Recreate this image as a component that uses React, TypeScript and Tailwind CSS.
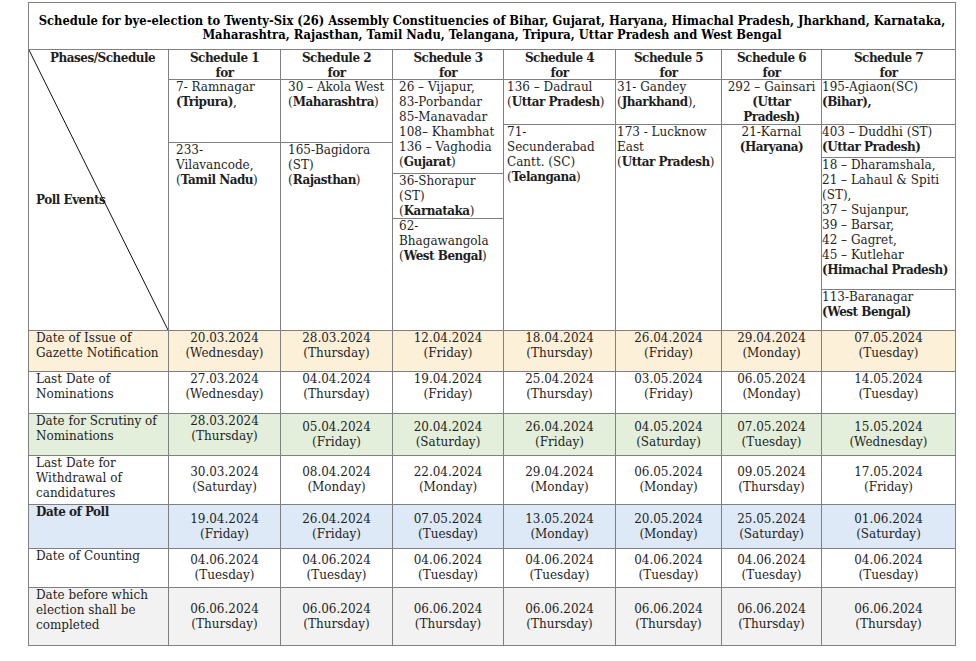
import React from 'react';

const serif = { fontFamily: "'DejaVu Serif', 'Liberation Serif', serif" };

const rows = [
  {
    label: ['Date of Issue of', 'Gazette Notification'],
    bg: 'bg-[#fdf0d8]',
    h: 'h-[41px]',
    top: true,
    dates: [
      ['20.03.2024', '(Wednesday)'],
      ['28.03.2024', '(Thursday)'],
      ['12.04.2024', '(Friday)'],
      ['18.04.2024', '(Thursday)'],
      ['26.04.2024', '(Friday)'],
      ['29.04.2024', '(Monday)'],
      ['07.05.2024', '(Tuesday)'],
    ],
  },
  {
    label: ['Last Date of', 'Nominations'],
    bg: 'bg-white',
    h: 'h-[42px]',
    top: true,
    dates: [
      ['27.03.2024', '(Wednesday)'],
      ['04.04.2024', '(Thursday)'],
      ['19.04.2024', '(Friday)'],
      ['25.04.2024', '(Thursday)'],
      ['03.05.2024', '(Friday)'],
      ['06.05.2024', '(Monday)'],
      ['14.05.2024', '(Tuesday)'],
    ],
  },
  {
    label: ['Date for Scrutiny of', 'Nominations'],
    bg: 'bg-[#e3efdb]',
    h: 'h-[42px]',
    top: false,
    firstTop: true,
    dates: [
      ['28.03.2024', '(Thursday)'],
      ['05.04.2024', '(Friday)'],
      ['20.04.2024', '(Saturday)'],
      ['26.04.2024', '(Friday)'],
      ['04.05.2024', '(Saturday)'],
      ['07.05.2024', '(Tuesday)'],
      ['15.05.2024', '(Wednesday)'],
    ],
  },
  {
    label: ['Last Date for', 'Withdrawal of', 'candidatures'],
    bg: 'bg-white',
    h: 'h-[49px]',
    top: false,
    dates: [
      ['30.03.2024', '(Saturday)'],
      ['08.04.2024', '(Monday)'],
      ['22.04.2024', '(Monday)'],
      ['29.04.2024', '(Monday)'],
      ['06.05.2024', '(Monday)'],
      ['09.05.2024', '(Thursday)'],
      ['17.05.2024', '(Friday)'],
    ],
  },
  {
    label: ['Date of Poll'],
    bold: true,
    bg: 'bg-[#dde9f6]',
    h: 'h-[44px]',
    top: false,
    dates: [
      ['19.04.2024', '(Friday)'],
      ['26.04.2024', '(Friday)'],
      ['07.05.2024', '(Tuesday)'],
      ['13.05.2024', '(Monday)'],
      ['20.05.2024', '(Monday)'],
      ['25.05.2024', '(Saturday)'],
      ['01.06.2024', '(Saturday)'],
    ],
  },
  {
    label: ['Date of Counting'],
    bg: 'bg-white',
    h: 'h-[39px]',
    top: false,
    dates: Array(7).fill(['04.06.2024', '(Tuesday)']),
  },
  {
    label: ['Date before which', 'election shall be', 'completed'],
    bg: 'bg-[#f2f2f2]',
    h: 'h-[58px]',
    top: false,
    dates: Array(7).fill(['06.06.2024', '(Thursday)']),
  },
];

const B = ({ children }: { children: React.ReactNode }) => (
  <b className="font-bold tracking-[-0.5px]">{children}</b>
);

// a stacked cell inside a schedule column
const Sub = ({ h, pad, lines, last }: { h: string; pad: string; lines: React.ReactNode[]; last?: boolean }) => (
  <div className={`${h} ${pad} ${last ? '' : 'border-b border-[#808080]'} whitespace-nowrap`}>
    {lines.map((l, i) => (
      <div key={i}>{l}</div>
    ))}
  </div>
);

const Head = ({ n }: { n: number }) => (
  <div className="h-[30px] border-b border-[#808080] text-center font-bold tracking-[-0.5px] pt-px">
    <div>Schedule {n}</div>
    <div>for</div>
  </div>
);

const App: React.FC = () => {
  return (
    <div className="min-h-screen bg-white pl-[28px] pt-[2px] text-[12px] leading-[15px] text-[#1e1e1e]" style={serif}>
      <div className="w-[928px]">
        {/* Title */}
        <div className="h-[48px] border border-[#808080] text-center font-bold font-stretch-condensed text-[12.8px] leading-[14px] pt-[11px] text-black">
          <div className="whitespace-nowrap">
            Schedule for bye-election to Twenty-Six (26) Assembly Constituencies of Bihar, Gujarat, Haryana, Himachal Pradesh, Jharkhand, Karnataka,
          </div>
          <div className="whitespace-nowrap">
            Maharashtra, Rajasthan, Tamil Nadu, Telangana, Tripura, Uttar Pradesh and West Bengal
          </div>
        </div>

        <div className="border-l border-[#808080] grid grid-cols-[140px_112px_112px_111px_112px_106px_100px_134px]">
          {/* Phases / Schedule cell with diagonal */}
          <div className="relative h-[281px] border-r border-b border-[#808080] font-bold tracking-[-0.5px]">
            <svg className="absolute inset-0 w-full h-full" viewBox="0 0 139 280" preserveAspectRatio="none">
              <line x1="0" y1="0" x2="139" y2="280" stroke="#111" strokeWidth="1" />
            </svg>
            <div className="pl-[21px] pt-px">Phases/Schedule</div>
            <div className="pl-[7px] mt-[127px]">Poll Events</div>
          </div>

          <div className="h-[281px] border-r border-b border-[#808080] flex flex-col">
            <Head n={1} />
            <Sub h="h-[63px]" pad="pl-[7px]" lines={['7- Ramnagar', <><B>(Tripura)</B>,</>]} />
            <Sub h="flex-1" pad="pl-[7px]" last lines={['233-', 'Vilavancode,', <>(<B>Tamil Nadu</B>)</>]} />
          </div>

          <div className="h-[281px] border-r border-b border-[#808080] flex flex-col">
            <Head n={2} />
            <Sub h="h-[63px]" pad="pl-[7px]" lines={['30 – Akola West', <>(<B>Maharashtra</B>)</>]} />
            <Sub h="flex-1" pad="pl-[7px]" last lines={['165-Bagidora', '(ST)', <>(<B>Rajasthan</B>)</>]} />
          </div>

          <div className="h-[281px] border-r border-b border-[#808080] flex flex-col">
            <Head n={3} />
            <Sub
              h="h-[94px]"
              pad="pl-[6px]"
              lines={['26 – Vijapur,', '83-Porbandar', '85-Manavadar', '108– Khambhat', '136 – Vaghodia', <>(<B>Gujarat</B>)</>]}
            />
            <Sub h="h-[45px]" pad="pl-[6px]" lines={['36-Shorapur', '(ST)', <>(<B>Karnataka</B>)</>]} />
            <Sub h="flex-1" pad="pl-[6px]" last lines={['62-', 'Bhagawangola', <>(<B>West Bengal</B>)</>]} />
          </div>

          <div className="h-[281px] border-r border-b border-[#808080] flex flex-col">
            <Head n={4} />
            <Sub h="h-[45px]" pad="pl-[3px]" lines={['136 – Dadraul', <>(<B>Uttar Pradesh</B>)</>]} />
            <Sub h="flex-1" pad="pl-[3px]" last lines={['71-', 'Secunderabad', 'Cantt. (SC)', <>(<B>Telangana</B>)</>]} />
          </div>

          <div className="h-[281px] border-r border-b border-[#808080] flex flex-col">
            <Head n={5} />
            <Sub h="h-[45px]" pad="pl-px" lines={['31- Gandey', <>(<B>Jharkhand</B>),</>]} />
            <Sub h="flex-1" pad="pl-px" last lines={['173 - Lucknow', 'East', <>(<B>Uttar Pradesh</B>)</>]} />
          </div>

          <div className="h-[281px] border-r border-b border-[#808080] flex flex-col">
            <Head n={6} />
            <Sub h="h-[45px]" pad="text-center" lines={['292 – Gainsari', <B>(Uttar</B>, <B>Pradesh)</B>]} />
            <Sub h="flex-1" pad="text-center" last lines={['21-Karnal', <B>(Haryana)</B>]} />
          </div>

          <div className="h-[281px] border-r border-b border-[#808080] flex flex-col">
            <Head n={7} />
            <Sub h="h-[45px]" pad="pl-0" lines={['195-Agiaon(SC)', <B>(Bihar),</B>]} />
            <Sub h="h-[33px]" pad="pl-0" lines={['403 – Duddhi (ST)', <B>(Uttar Pradesh)</B>]} />
            <Sub
              h="h-[132px]"
              pad="pl-0"
              lines={[
                '18 – Dharamshala,',
                '21 – Lahaul & Spiti',
                '(ST),',
                '37 – Sujanpur,',
                '39 – Barsar,',
                '42 – Gagret,',
                '45 – Kutlehar',
                <B>(Himachal Pradesh)</B>,
              ]}
            />
            <Sub h="flex-1" pad="pl-0" last lines={['113-Baranagar', <B>(West Bengal)</B>]} />
          </div>

          {/* Poll event rows */}
          {rows.map((r, ri) => (
            <React.Fragment key={ri}>
              <div
                className={`${r.h} ${r.bg} border-r border-b border-[#808080] pl-[7px] ${
                  r.bold ? 'font-bold tracking-[-0.5px]' : ''
                }`}
              >
                {r.label.map((l) => (
                  <div key={l} className="whitespace-nowrap">
                    {l}
                  </div>
                ))}
              </div>
              {r.dates.map((d: string[], di: number) => (
                <div
                  key={di}
                  className={`${r.h} ${r.bg} border-r border-b border-[#808080] flex flex-col items-center text-center ${
                    r.top || (di === 0 && r.firstTop) ? 'justify-start' : 'justify-center'
                  }`}
                >
                  <div>{d[0]}</div>
                  <div>{d[1]}</div>
                </div>
              ))}
            </React.Fragment>
          ))}
        </div>
      </div>
    </div>
  );
};

export default App;
